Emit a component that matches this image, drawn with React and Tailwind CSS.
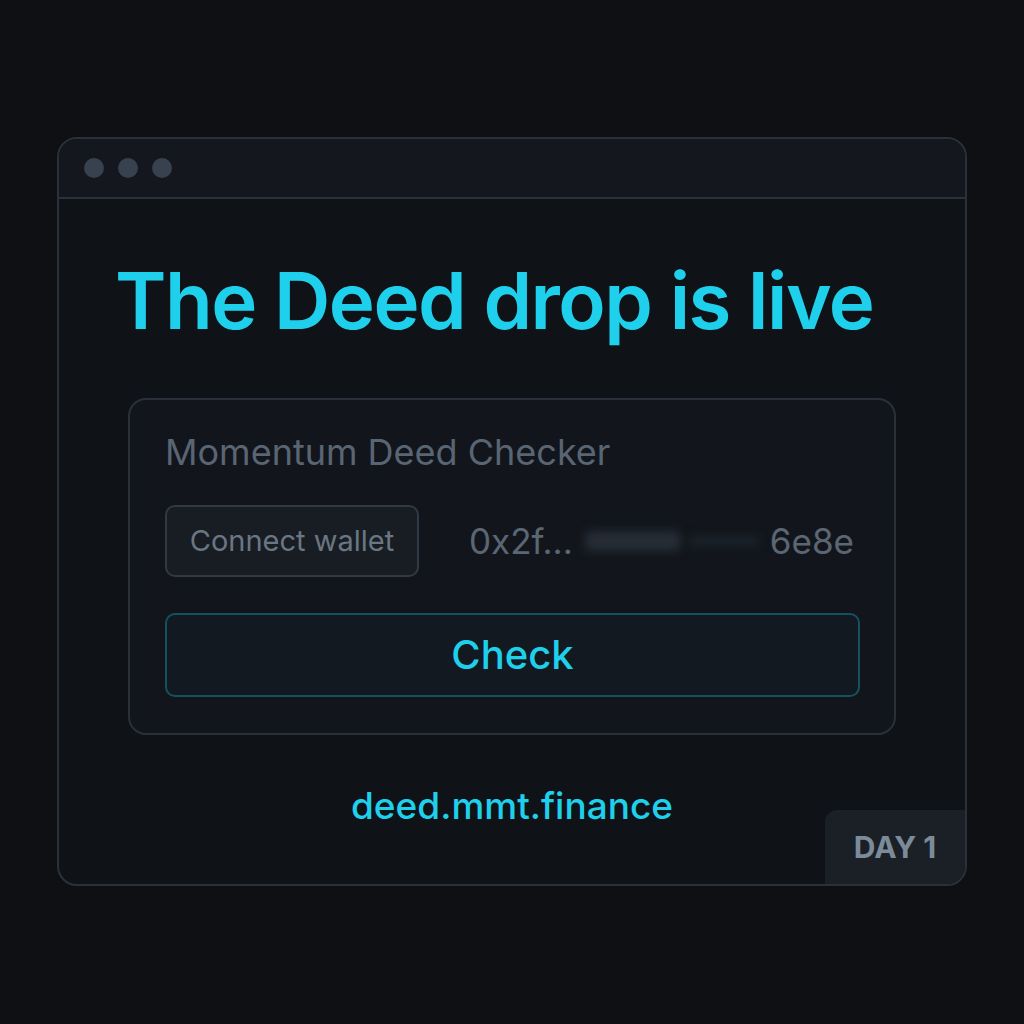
import React from "react";

const App = () => {
  return (
    <div
      className="w-[1024px] h-[1024px] bg-[#0e1014] pt-[137px]"
      style={{ fontFamily: "Inter, 'Noto Sans', sans-serif" }}
    >
      {/* Browser window */}
      <div className="relative mx-auto w-[910px] h-[749px] rounded-[20px] border-2 border-[#2a313b] bg-[#0f1216] overflow-hidden flex flex-col">
        {/* Title bar */}
        <div className="h-[60px] shrink-0 bg-[#14181e] border-b-2 border-[#2a313b] flex items-center gap-[14px] pl-[25px]">
          <span className="w-[20px] h-[20px] rounded-full bg-[#374150]" />
          <span className="w-[20px] h-[20px] rounded-full bg-[#374150]" />
          <span className="w-[20px] h-[20px] rounded-full bg-[#374150]" />
        </div>

        {/* Body */}
        <div className="flex flex-col pl-[69px] pt-[52px]">
          <h1 className="-ml-[13px] text-[78px] leading-[100px] font-semibold tracking-[-1.5px] text-[#1fd0ec]">
            The Deed drop is live
          </h1>

          {/* Checker card */}
          <div className="mt-[47px] w-[768px] h-[337px] rounded-[18px] border-2 border-[#29303a] bg-[#12161c] pl-[35px] pr-[35px] pt-[26px] flex flex-col">
            <div className="text-[36px] leading-[52px] text-[#5a6573]">
              Momentum Deed Checker
            </div>

            <div className="mt-[27px] flex items-center">
              <button className="w-[254px] h-[72px] rounded-[10px] border-2 border-[#313944] bg-[#181d24] text-[29px] text-[#6b7683]">
                Connect wallet
              </button>
              <div className="flex-1 flex items-center pl-[50px] pr-[5px] text-[35px] text-[#5c6673]">
                <span>0x2f...</span>
                <span className="ml-[12px] w-[96px] h-[20px] rounded-md bg-[#262d36] blur-[5px]" />
                <span className="ml-[8px] w-[70px] h-[10px] rounded bg-[#1c222a] blur-[4px]" />
                <span className="ml-auto">6e8e</span>
              </div>
            </div>

            <button className="mt-[36px] w-[695px] h-[84px] rounded-[10px] border-2 border-[#14525c] bg-[#121920] text-[40px] font-medium text-[#1fd0ec]">
              Check
            </button>
          </div>

          <div className="mt-[43px] pr-[69px] text-center text-[37px] font-medium text-[#1fd0ec]">
            deed.mmt.finance
          </div>
        </div>

        {/* Day badge */}
        <div className="absolute right-0 bottom-0 w-[140px] h-[74px] rounded-tl-[12px] bg-[#1b2027] flex items-center justify-center text-[30px] font-bold text-[#7b8b99]">
          DAY 1
        </div>
      </div>
    </div>
  );
};

export default App;
